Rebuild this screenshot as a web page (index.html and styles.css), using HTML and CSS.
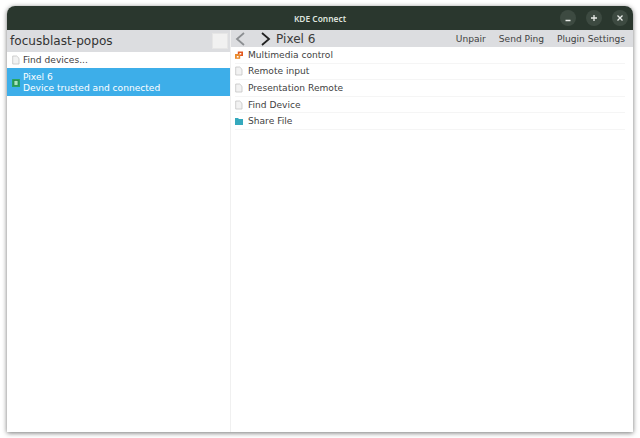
FILE: index.html
```html
<!DOCTYPE html>
<html lang="en">
<head>
<meta charset="utf-8">
<title>KDE Connect</title>
<link rel="stylesheet" href="styles.css">
</head>
<body>
<div class="window">
  <header class="titlebar">
    <div class="title">KDE Connect</div>
    <div class="controls">
      <button class="ctl"><svg viewBox="0 0 16 16"><path d="M5.500 10.500h5" /></svg></button>
      <button class="ctl"><svg viewBox="0 0 16 16"><path d="M8 5v6M5 8h6" /></svg></button>
      <button class="ctl"><svg viewBox="0 0 16 16"><path d="M5.500 5.500l5 5M10.500 5.500l-5 5" /></svg></button>
    </div>
  </header>
  <div class="main">
    <aside class="side">
      <div class="side-head">
        <span class="host">focusblast-popos</span>
        <span class="square"></span>
      </div>
      <div class="find">
        <svg class="ico" viewBox="0 0 8 10"><path class="doc" d="M.7 1h4l2.300 2.300V9H.7z"/></svg>
        <span>Find devices...</span>
      </div>
      <div class="device">
        <svg class="ico" viewBox="0 0 8 10"><rect x="0" y="1" width="8" height="8" rx=".5" fill="#2aa55f"/><rect x="2" y="2.500" width="4" height="5" fill="#a9e6bd" stroke="#1c7d45" stroke-width=".7"/></svg>
        <div>
          <div>Pixel 6</div>
          <div>Device trusted and connected</div>
        </div>
      </div>
    </aside>
    <section class="content">
      <div class="toolbar">
        <svg class="nav" viewBox="0 0 12 16"><path class="back" d="M10 2L3 8l7 6"/></svg>
        <svg class="nav fwd" viewBox="0 0 12 16"><path d="M2 2l7 6-7 6"/></svg>
        <span class="device-name">Pixel 6</span>
        <div class="actions">
          <span>Unpair</span>
          <span>Send Ping</span>
          <span>Plugin Settings</span>
        </div>
      </div>
      <ul class="plugins">
        <li><svg class="ico" viewBox="0 0 8 10"><rect x="2.800" y="1.500" width="5.200" height="4.500" fill="#e2581f"/><rect x="0" y="4" width="5.200" height="4.800" fill="#e98a2e"/><rect x="1.800" y="6" width="1.800" height="1.500" fill="#fff"/><rect x="4.500" y="3" width="1.800" height="1.500" fill="#fff"/></svg>Multimedia control</li>
        <li><svg class="ico" viewBox="0 0 8 10"><path class="doc" d="M.7 1h4l2.300 2.300V9H.7z"/></svg>Remote input</li>
        <li><svg class="ico" viewBox="0 0 8 10"><path class="doc" d="M.7 1h4l2.300 2.300V9H.7z"/></svg>Presentation Remote</li>
        <li><svg class="ico" viewBox="0 0 8 10"><path class="doc" d="M.7 1h4l2.300 2.300V9H.7z"/></svg>Find Device</li>
        <li><svg class="ico" viewBox="0 0 8 10"><path d="M0 2h3l1 1h4v6H0z" fill="#35a9bd"/></svg>Share File</li>
      </ul>
    </section>
  </div>
</div>
</body>
</html>
```
FILE: styles.css
```css
* { box-sizing: border-box; }
html, body { margin: 0; height: 100%; background: #fff; overflow: hidden; }
body { padding: 6px 7px; font-family: "DejaVu Sans", sans-serif; font-size: 9.1px; color: #424242; }
.window {
  width: 626px; height: 426px; display: flex; flex-direction: column;
  border-radius: 8px 8px 0 0; background: #fff;
  box-shadow: 0 1px 5px rgba(0,0,0,.55);
  overflow: hidden;
}
.titlebar {
  height: 24px; flex: none; background: #2a372e; color: #dfe3df;
  display: flex; align-items: center; justify-content: center; position: relative;
}
.title { font-family: "Noto Sans", sans-serif; font-size: 8.4px; font-weight: 600; }
.controls { position: absolute; top: 3.500px; right: 5px; display: flex; gap: 10px; }
.ctl {
  width: 16px; height: 16px; padding: 0; border: 0; border-radius: 50%;
  background: #3d4a41; display: block;
}
.ctl svg { display: block; width: 16px; height: 16px; }
.ctl path { stroke: #e8ebe8; stroke-width: 1.3; fill: none; }
.main { flex: 1; display: flex; min-height: 0; }
.side { width: 224px; flex: none; border-right: 1px solid #f0f0f0; }
.side-head {
  height: 22px; background: #dcdde0; display: flex; align-items: center;
  justify-content: space-between; padding: 0 2px 0 3px;
}
.host { font-size: 12.100px; color: #333; }
.square { width: 16px; height: 16px; background: #f1f1f1; border: 1px solid #e6e6e6; }
.ico { width: 8px; height: 10px; flex: none; display: block; }
.doc { fill: #f2f2f2; stroke: #c4c4c4; stroke-width: .8; }
.find {
  height: 16px; display: flex; align-items: center; gap: 3px; padding-left: 5px;
}
.device {
  height: 28px; background: #3daee9; color: #fff; display: flex; align-items: center;
  gap: 3px; padding: 1px 0 0 5px; line-height: 11px;
}
.content { flex: 1; min-width: 0; }
.toolbar {
  height: 17px; background: #dcdde0; display: flex; align-items: center;
  padding: 0 8px 0 3px;
}
.nav { width: 12px; height: 16px; display: block; fill: none; stroke: #222; stroke-width: 1.8; }
.back { stroke: #8c8f92; }
.fwd { margin-left: 14px; }
.device-name { margin-left: 4px; font-size: 12.100px; color: #3a3a3a; }
.actions { margin-left: auto; display: flex; gap: 13px; }
.plugins { list-style: none; margin: 0; padding: 0 8px 0 4px; }
.plugins li {
  height: 16.6px; display: flex; align-items: center; gap: 5px;
  border-bottom: 1px solid #f5f5f5;
}
```
